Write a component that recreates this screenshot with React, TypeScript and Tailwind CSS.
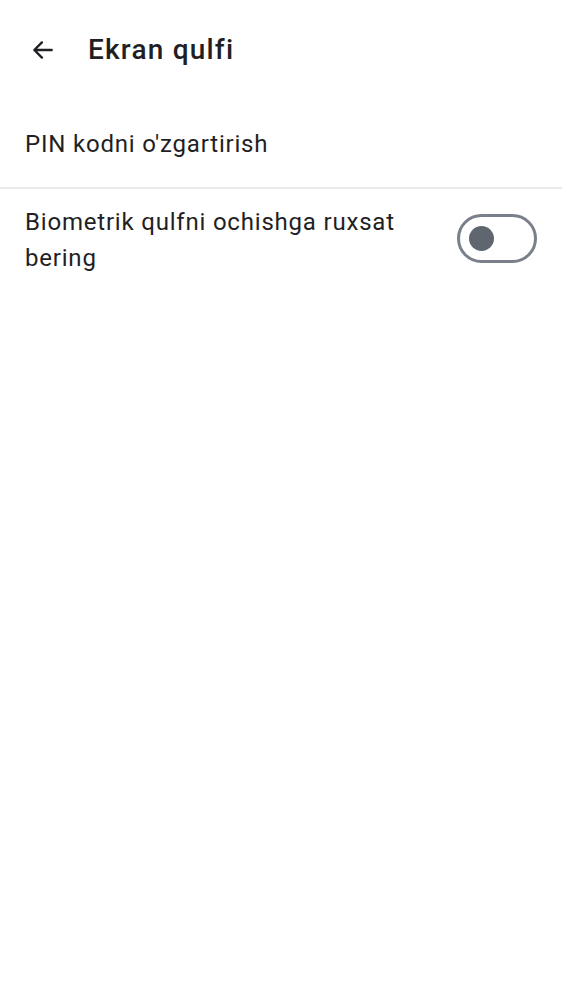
import React from "react";

export default function App() {
  return (
    <div className="min-h-[1000px] w-full bg-white text-[#1f1f24]" style={{ fontFamily: "Roboto, 'Noto Sans', sans-serif" }}>
      <div className="flex h-[100px] items-center pl-[30px]">
        <svg width="26" height="26" viewBox="0 0 24 24" className="text-[#1f1f24]">
          <path d="M20 12H4.5M11 5l-7 7 7 7" fill="none" stroke="currentColor" strokeWidth="2.2" strokeLinecap="round" strokeLinejoin="round" />
        </svg>
        <h1 className="ml-[32px] text-[28px] font-medium tracking-[1.2px]">Ekran qulfi</h1>
      </div>
      <div className="flex h-[89px] items-center border-b-2 border-[#e8eaed] px-[25px] pt-[1px]">
        <span className="text-[24px] tracking-[0.8px]">PIN kodni o'zgartirish</span>
      </div>
      <div className="flex items-start justify-between pl-[25px] pr-[25px] pt-[15px]">
        <span className="w-[410px] text-[24px] leading-[36px] tracking-[0.8px]">Biometrik qulfni ochishga ruxsat bering</span>
        <div className="mt-[10px] flex h-[49px] w-[80px] shrink-0 items-center rounded-full border-[3px] border-[#79808a] pl-[9px]">
          <div className="h-[25px] w-[25px] rounded-full bg-[#5f6670]" />
        </div>
      </div>
    </div>
  );
}
